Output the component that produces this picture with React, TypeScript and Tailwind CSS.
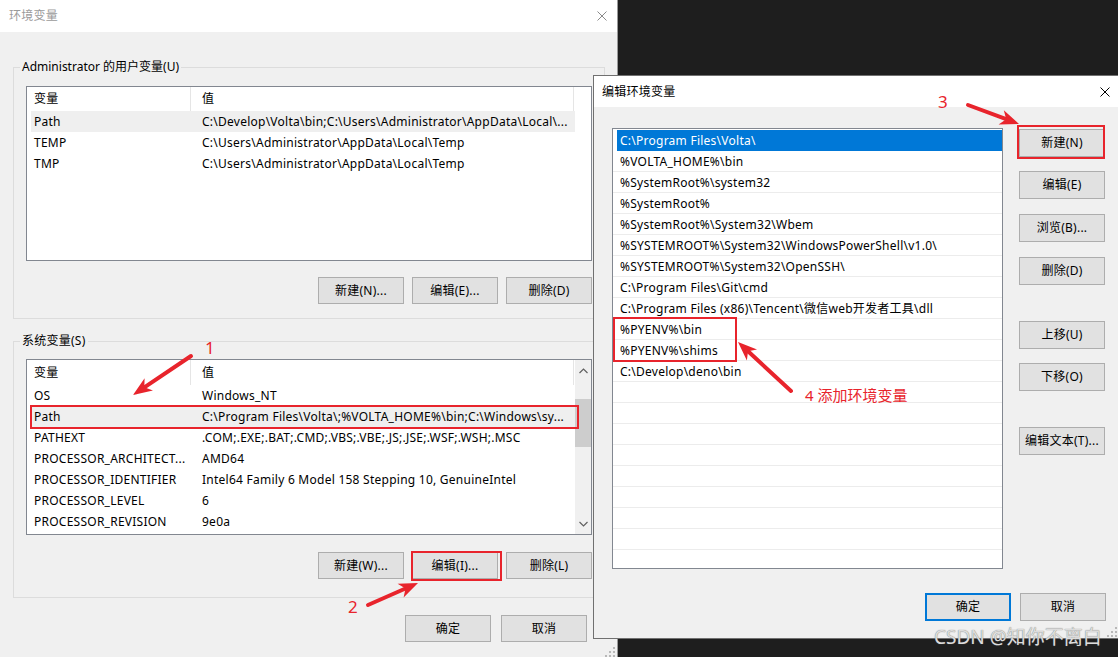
import React from "react";

const F = "font-['Noto_Sans','Noto_Sans_CJK_SC',sans-serif]";

function CloseX({ className }: { className: string }) {
  return (
    <svg width="10" height="10" viewBox="0 0 10 10" className={className}>
      <path d="M0.5 0.5 L9.5 9.5 M9.5 0.5 L0.5 9.5" stroke="currentColor" strokeWidth="1" fill="none" />
    </svg>
  );
}

function Btn({ children, size, primary = false }: { children: React.ReactNode; size: string; primary?: boolean }) {
  const b = primary ? "border-2 border-[#0078d7]" : "border border-[#adadad]";
  return (
    <div className={`flex items-center justify-center bg-[#e1e1e1] text-[12px] text-black leading-none whitespace-nowrap ${b} ${size}`}>
      {children}
    </div>
  );
}

type Row = { k: string; v: string; hl?: boolean };

function Chevron({ up }: { up: boolean }) {
  return (
    <svg width="9" height="6" viewBox="0 0 9 6">
      <path d={up ? "M0.5 5 L4.5 1 L8.5 5" : "M0.5 1 L4.5 5 L8.5 1"} stroke="#606060" strokeWidth="1.2" fill="none" />
    </svg>
  );
}

function ListView({ rows, scroll, size, head }: { rows: Row[]; scroll: boolean; size: string; head: string }) {
  return (
    <div className={`flex border border-[#828790] bg-white overflow-hidden ${size}`}>
      <div className="w-[548px] flex flex-col shrink-0">
        <div className={`flex shrink-0 ${head}`}>
          <div className="w-[164px] border-r border-[#e5e5e5] pl-[7px] flex items-center">变量</div>
          <div className="w-[383px] border-r border-[#e5e5e5] pl-[11px] flex items-center">值</div>
        </div>
        {rows.map((r, i) => (
          <div key={i} className={`flex h-[21px] shrink-0 items-center ml-[4px] ${r.hl ? "bg-[#efefef]" : ""}`}>
            <div className="w-[160px] pl-[3px] whitespace-nowrap">{r.k}</div>
            <div className="pl-[11px] whitespace-nowrap">{r.v}</div>
          </div>
        ))}
      </div>
      {scroll ? (
        <div className="w-[16px] bg-[#f0f0f0] flex flex-col shrink-0">
          <div className="h-[22px] flex items-center justify-center">
            <Chevron up />
          </div>
          <div className="flex-1 flex flex-col">
            <div className="h-[48px] mt-[17px] bg-[#cdcdcd]" />
          </div>
          <div className="h-[20px] flex items-center justify-center">
            <Chevron up={false} />
          </div>
        </div>
      ) : (
        <div className="flex-1" />
      )}
    </div>
  );
}

function Grip() {
  const dots = [
    [8, 0],
    [8, 4],
    [4, 4],
    [8, 8],
    [4, 8],
    [0, 8],
  ];
  return (
    <svg width="10" height="10" viewBox="0 0 10 10">
      {dots.map(([x, y], i) => (
        <rect key={i} x={x} y={y} width="2" height="2" fill="#b8b8b8" />
      ))}
    </svg>
  );
}

function Arrow({ x1, y1, x2, y2 }: { x1: number; y1: number; x2: number; y2: number }) {
  const dx = x2 - x1;
  const dy = y2 - y1;
  const len = Math.hypot(dx, dy);
  const ux = dx / len;
  const uy = dy / len;
  const px = -uy;
  const py = ux;
  const L = 19;
  const W = 7.5;
  const bx = x2 - ux * L;
  const by = y2 - uy * L;
  const nx = x2 - ux * L * 0.72;
  const ny = y2 - uy * L * 0.72;
  const pts = `${x2},${y2} ${bx + px * W},${by + py * W} ${nx},${ny} ${bx - px * W},${by - py * W}`;
  return (
    <g>
      <line x1={x1} y1={y1} x2={nx} y2={ny} stroke="#e8242c" strokeWidth="4" strokeLinecap="round" />
      <polygon points={pts} fill="#e8242c" />
    </g>
  );
}

const userRows: Row[] = [
  { k: "Path", v: "C:\\Develop\\Volta\\bin;C:\\Users\\Administrator\\AppData\\Local\\...", hl: true },
  { k: "TEMP", v: "C:\\Users\\Administrator\\AppData\\Local\\Temp" },
  { k: "TMP", v: "C:\\Users\\Administrator\\AppData\\Local\\Temp" },
];

const sysRows: Row[] = [
  { k: "OS", v: "Windows_NT" },
  { k: "Path", v: "C:\\Program Files\\Volta\\;%VOLTA_HOME%\\bin;C:\\Windows\\sy...", hl: true },
  { k: "PATHEXT", v: ".COM;.EXE;.BAT;.CMD;.VBS;.VBE;.JS;.JSE;.WSF;.WSH;.MSC" },
  { k: "PROCESSOR_ARCHITECT...", v: "AMD64" },
  { k: "PROCESSOR_IDENTIFIER", v: "Intel64 Family 6 Model 158 Stepping 10, GenuineIntel" },
  { k: "PROCESSOR_LEVEL", v: "6" },
  { k: "PROCESSOR_REVISION", v: "9e0a" },
];

const pathItems = [
  "C:\\Program Files\\Volta\\",
  "%VOLTA_HOME%\\bin",
  "%SystemRoot%\\system32",
  "%SystemRoot%",
  "%SystemRoot%\\System32\\Wbem",
  "%SYSTEMROOT%\\System32\\WindowsPowerShell\\v1.0\\",
  "%SYSTEMROOT%\\System32\\OpenSSH\\",
  "C:\\Program Files\\Git\\cmd",
  "C:\\Program Files (x86)\\Tencent\\微信web开发者工具\\dll",
  "%PYENV%\\bin",
  "%PYENV%\\shims",
  "C:\\Develop\\deno\\bin",
  "",
  "",
  "",
  "",
  "",
  "",
  "",
  "",
  "",
];

export default function App() {
  return (
    <div className={`relative w-[1118px] h-[657px] overflow-hidden bg-[#1e1e1e] text-[12px] tracking-[0.25px] text-black ${F}`}>
      {/* Left dialog: 环境变量 */}
      <div className="absolute left-0 top-0 w-[618px] h-[658px] bg-[#f0f0f0] border-r border-[#9a9a9a] flex flex-col">
        <div className="h-[32px] bg-white flex items-center justify-between pl-[9px] pr-[10px] shrink-0">
          <span className="text-[12px] text-[#9a9a9a]">环境变量</span>
          <CloseX className="text-[#8a8a8a]" />
        </div>
        <div className="flex flex-col pl-[13px] pr-[12px] pt-[27px]">
          <fieldset className="border border-[#dcdcdc]">
            <legend className="ml-[6px] px-[2px] leading-[16px] tracking-[0px]">Administrator 的用户变量(U)</legend>
            <div className="flex flex-col px-[12px] pb-[14px]">
              <div className="mt-[11px]">
                <ListView rows={userRows} scroll={false} size="h-[175px]" head="h-[24px]" />
              </div>
              <div className="flex justify-end gap-[8px] mt-[16px]">
                <Btn size="w-[86px] h-[27px]">新建(N)...</Btn>
                <Btn size="w-[86px] h-[27px]">编辑(E)...</Btn>
                <Btn size="w-[86px] h-[27px]">删除(D)</Btn>
              </div>
            </div>
          </fieldset>
          <fieldset className="border border-[#dcdcdc] mt-[14px]">
            <legend className="ml-[6px] px-[2px] leading-[16px]">系统变量(S)</legend>
            <div className="flex flex-col px-[12px] pb-[18px]">
              <div className="mt-[10px]">
                <ListView rows={sysRows} scroll size="h-[176px]" head="h-[25px]" />
              </div>
              <div className="flex justify-end gap-[8px] mt-[17px]">
                <Btn size="w-[86px] h-[27px]">新建(W)...</Btn>
                <Btn size="w-[86px] h-[27px]">编辑(I)...</Btn>
                <Btn size="w-[86px] h-[27px]">删除(L)</Btn>
              </div>
            </div>
          </fieldset>
          <div className="flex justify-end gap-[10px] mt-[17px] pr-[18px]">
            <Btn size="w-[86px] h-[27px]">确定</Btn>
            <Btn size="w-[86px] h-[27px]">取消</Btn>
          </div>
        </div>
        <div className="absolute right-[2px] bottom-[1px]">
          <Grip />
        </div>
      </div>

      {/* Right dialog: 编辑环境变量 */}
      <div className="absolute left-[593px] top-[75px] w-[527px] h-[564px] bg-[#f0f0f0] border border-[#707070] flex flex-col">
        <div className="h-[31px] bg-white flex items-center justify-between pl-[8px] pr-[9px] shrink-0">
          <span className="text-[12px] text-black">编辑环境变量</span>
          <CloseX className="text-black" />
        </div>
        <div className="flex pl-[18px] pt-[21px]">
          <div className="w-[391px] h-[441px] border border-[#828790] bg-white overflow-hidden flex flex-col pt-[1px] shrink-0">
            {pathItems.map((t, i) => (
              <div
                key={i}
                className={`h-[21px] shrink-0 flex items-center whitespace-nowrap ${
                  i === 0 ? "bg-[#0078d7] text-white ml-[4px] pl-[3px]" : "border-b border-[#ececec] pl-[7px] pt-[1px]"
                }`}
              >
                {t}
              </div>
            ))}
          </div>
          <div className="flex flex-col ml-[16px] w-[86px]">
            <div className="mt-[1px]">
              <Btn size="w-[86px] h-[28px]">新建(N)</Btn>
            </div>
            <div className="mt-[14px]">
              <Btn size="w-[86px] h-[28px]">编辑(E)</Btn>
            </div>
            <div className="mt-[15px]">
              <Btn size="w-[86px] h-[28px]">浏览(B)...</Btn>
            </div>
            <div className="mt-[15px]">
              <Btn size="w-[86px] h-[28px]">删除(D)</Btn>
            </div>
            <div className="mt-[36px]">
              <Btn size="w-[86px] h-[28px]">上移(U)</Btn>
            </div>
            <div className="mt-[14px]">
              <Btn size="w-[86px] h-[28px]">下移(O)</Btn>
            </div>
            <div className="mt-[36px]">
              <Btn size="w-[86px] h-[28px]">编辑文本(T)...</Btn>
            </div>
          </div>
        </div>
        <div className="flex justify-end gap-[9px] mt-[24px] pr-[13px]">
          <Btn size="w-[86px] h-[28px]" primary>
            确定
          </Btn>
          <Btn size="w-[86px] h-[28px]">取消</Btn>
        </div>
        <div className="absolute right-[2px] bottom-[1px]">
          <Grip />
        </div>
      </div>

      {/* Annotation boxes */}
      <div className="absolute left-[30px] top-[405px] w-[549px] h-[24px] border-2 border-[#e8242c]" />
      <div className="absolute left-[411px] top-[551px] w-[91px] h-[30px] border-2 border-[#e8242c]" />
      <div className="absolute left-[1017px] top-[125px] w-[88px] h-[34px] border-2 border-[#e8242c]" />
      <div className="absolute left-[613px] top-[317px] w-[124px] h-[45px] border-2 border-[#e8242c]" />

      <svg className="absolute left-0 top-0 pointer-events-none" width="1118" height="657" viewBox="0 0 1118 657">
        <Arrow x1={191} y1={356} x2={133} y2={395} />
        <Arrow x1={368} y1={605} x2={418} y2={583} />
        <Arrow x1={968} y1={105} x2={1019} y2={124} />
        <Arrow x1={791} y1={391} x2={738} y2={342} />
      </svg>

      <div className="absolute left-[205px] top-[338px] text-[17px] leading-[20px] text-[#e8242c]">1</div>
      <div className="absolute left-[348px] top-[597px] text-[17px] leading-[20px] text-[#e8242c]">2</div>
      <div className="absolute left-[938px] top-[92px] text-[17px] leading-[20px] text-[#e8242c]">3</div>
      <div className="absolute left-[805px] top-[385px] text-[15px] leading-[20px] tracking-[0px] text-[#e8242c] whitespace-nowrap">
        4 添加环境变量
      </div>

      <div className="absolute left-[934px] top-[625px] text-[19px] leading-[24px] tracking-[0px] text-[#dcdcdc] whitespace-nowrap [text-shadow:0_0_1px_#666]">
        CSDN @知你不离白
      </div>
    </div>
  );
}
